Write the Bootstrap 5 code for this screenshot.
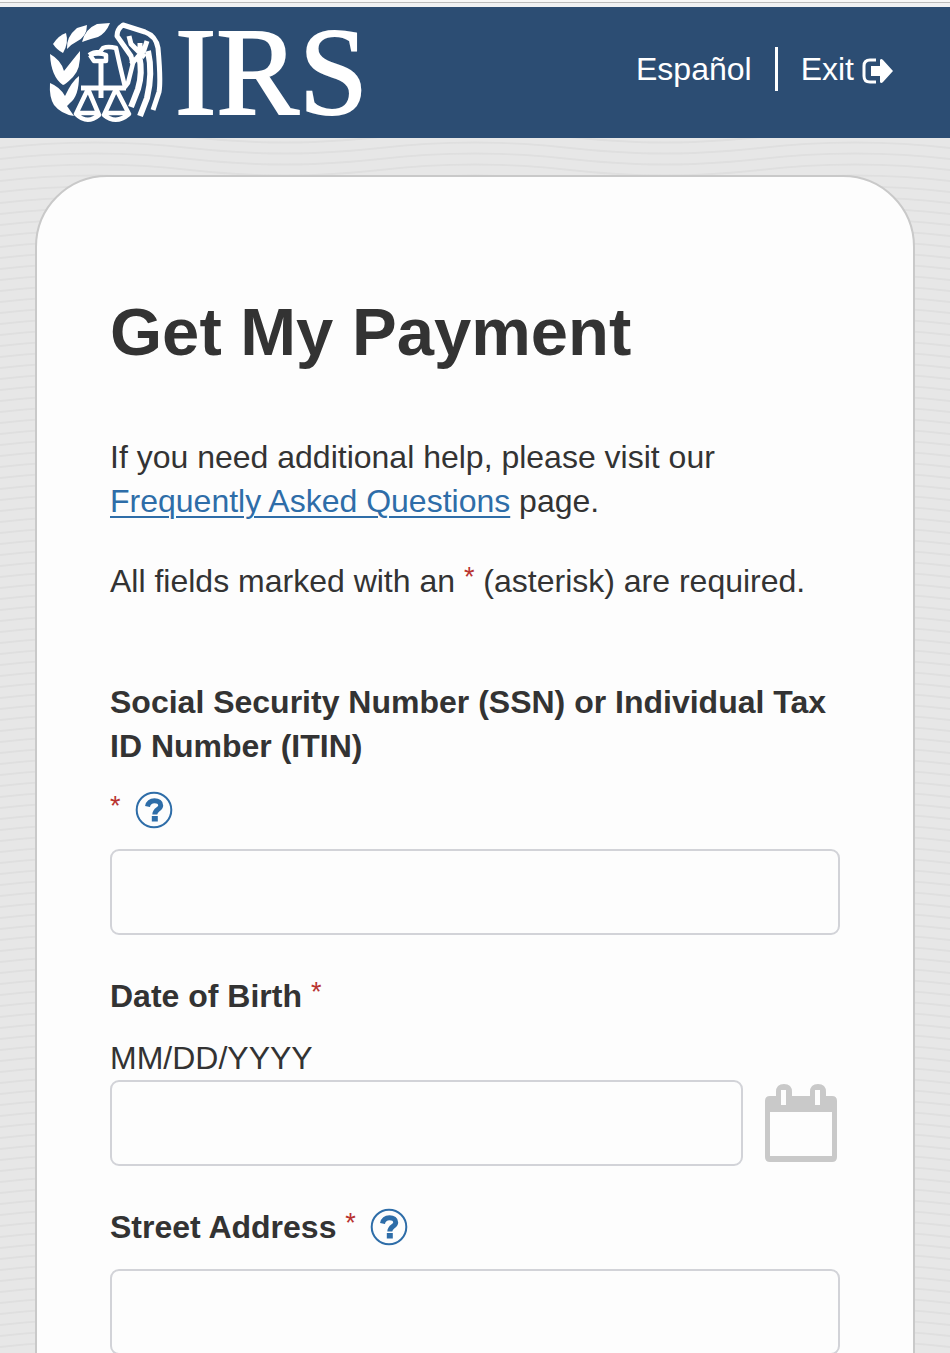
<!DOCTYPE html>
<html lang="en">
<head>
<meta charset="utf-8">
<meta name="viewport" content="width=device-width, initial-scale=1">
<title>Get My Payment</title>
<link href="https://cdn.jsdelivr.net/npm/bootstrap@5.3.0/dist/css/bootstrap.min.css" rel="stylesheet">
<style>
  body {
    font-family: "Liberation Sans", Arial, sans-serif;
    font-size: 32px;
    line-height: 44px;
    color: #333;
    background: #e7e7e7 url("data:image/svg+xml,%3Csvg xmlns='http://www.w3.org/2000/svg' width='380' height='11'%3E%3Cg fill='none' stroke='%23dfdfdf' stroke-width='2'%3E%3Cpath d='M0 5Q95-6 190 5T380 5M0 16Q95 5 190 16T380 16M0-6Q95-17 190-6T380-6'/%3E%3C/g%3E%3C/svg%3E");
  }
  .browser-edge { height: 7px; background: #f0f1f3; border-top: 2px solid #f7f7f7; }
  .browser-edge::before { content: ""; display: block; height: 1px; background: #bbb; }
  .site-header { height: 131px; background: #2c4d73; padding: 0 56px 0 49px; }
  .brand-eagle { width: 114px; height: 104px; }
  .brand-name { font: 124px/130px "Liberation Serif", "Times New Roman", serif; margin-left: 12px; -webkit-text-stroke: 2px #fff; }
  .site-nav { padding-bottom: 8px; }
  .exit-icon { margin-top: 4px; }
  .header-link { color: #fff; text-decoration: none; }
  .header-rule { width: 3px; height: 44px; background: #fff; margin: 0 23px; }
  .panel { margin: 37px 35px 0; border: 2px solid #c9c9c9; border-radius: 72px 72px 0 0; background: #fdfdfd; padding: 115px 73px 80px; }
  h1 { font-size: 67px; line-height: 80px; font-weight: 700; margin-bottom: 63px; }
  .faq { color: #2e6da8; text-decoration-thickness: 2px; text-underline-offset: 4px; }
  .star { color: #b93430; font-size: 27px; line-height: 32px; font-weight: 400; vertical-align: 6px; }
  .field-label { font-weight: 700; }
  .field-box { height: 86px; border: 2px solid #d2d3d8; border-radius: 9px; background: #fdfdfd; font-size: 32px; }
  .help-btn { width: 38px; height: 38px; }
  .cal-btn { width: 74px; height: 80px; margin: 0 2px 0 21px; }
  .intro { margin-bottom: 36px; }
  .note { margin-bottom: 77px; }
  .field-tools { height: 44px; margin: 20px 0 17px; }
  .field-tools .star { padding-bottom: 8px; }
  .tools-gap { margin-left: 14px; }
  .birth { margin: 39px 0 18px; }
  .street { margin: 39px 0 20px; }
</style>
</head>
<body>
<svg class="d-none" xmlns="http://www.w3.org/2000/svg">
  <symbol id="help" viewBox="0 0 38 38">
    <circle cx="19" cy="19" r="17.3" fill="none" stroke="#2e6da8" stroke-width="2"/>
    <path d="M12.500 15.500C13.500 11 16 9.800 19.500 9.800C23.500 9.800 25.700 11.600 25.700 14.400C25.700 18.500 19.800 18 19.800 23.500" fill="none" stroke="#2e6da8" stroke-width="5"/>
    <rect x="16.800" y="25" width="6" height="5.500" fill="#2e6da8"/>
  </symbol>
</svg>
<div class="vh-100 overflow-hidden">
  <div class="browser-edge"></div>
  <header class="site-header d-flex align-items-center justify-content-between text-white">
    <a href="#" class="header-link d-flex align-items-center" aria-label="IRS home">
      <svg class="brand-eagle" viewBox="0 0 114 104" fill="#fff" aria-hidden="true">
        <path d="M4 23Q10 14 17 12Q20 22 14 32Q8 29 4 23Z"/>
        <path d="M18 28Q17 16 28 7L38 4Q38 16 27 21Q21 24 18 28Z"/>
        <path d="M33 21Q36 8 48 3L61 2Q57 12 49 16Q41 18 33 21Z"/>
        <path d="M1 33Q12 39 15 50Q26 36 31 30Q32 48 24 56Q16 64 14 64Q2 56 1 33Z"/>
        <path d="M1 62Q11 66 16 75Q23 60 30 55Q30 75 21 82L18 85L25 95Q12 93 5 84Q0 76 1 62Z"/>
        <g fill="none" stroke="#fff" stroke-width="5" stroke-linejoin="round">
          <path d="M40 34Q44 31 51 31L54 27Q59 25 67 27L71 45L76 66L79 62L84 42M41 34L45 40H57V34Q50 31 40 34" stroke-width="4.500"/>
          <path d="M52 38V77M32 67H77"/>
          <path d="M39 68L27 93Q38 104 50 94ZM67 68L55 94Q67 104 80 93ZM27 92H49M57 92H78" stroke-width="4.500"/>
          <path d="M84 43L82 35L75 25L68 15Q68 8 74 4L96 11Q107 15 109 27Q112 60 110 71L104 89"/>
          <path d="M80 15L82 23L89 30L96 36M98 20L95 29L88 37L82 43M91 22V30"/>
          <path d="M90 34Q94 52 89 68L82 86" stroke-width="6"/>
          <path d="M99 30Q104 52 98 77L91 95" stroke-width="6"/>
        </g>
      </svg>
      <span class="brand-name">IRS</span>
    </a>
    <nav class="site-nav d-flex align-items-center">
      <a href="#" class="header-link">Español</a>
      <span class="header-rule"></span>
      <a href="#" class="header-link d-flex align-items-center">Exit
        <svg class="exit-icon ms-2" width="32" height="28" viewBox="0 0 32 28" aria-hidden="true">
          <path d="M14 3H8Q2 3 2 9V19Q2 25 8 25H14" fill="none" stroke="#fff" stroke-width="3"/>
          <path d="M9 9H18V3Q19 1 21 3L31 14L21 25Q19 27 18 25V19H9Z" fill="#fff"/>
        </svg>
      </a>
    </nav>
  </header>
  <main class="panel">
    <h1>Get My Payment</h1>
    <p class="intro">If you need additional help, please visit our <a href="#" class="faq">Frequently Asked Questions</a> page.</p>
    <p class="note">All fields marked with an <span class="star">*</span> (asterisk) are required.</p>
    <form>
      <label for="ssn" class="field-label d-block">Social Security Number (SSN) or Individual Tax ID Number (ITIN)</label>
      <div class="field-tools d-flex align-items-center">
        <span class="star">*</span>
        <button type="button" class="btn p-0 border-0 d-flex tools-gap" aria-label="Help with taxpayer number"><svg class="help-btn"><use href="#help"/></svg></button>
      </div>
      <input id="ssn" type="text" class="form-control field-box">
      <label for="dob" class="field-label birth d-block">Date of Birth <span class="star">*</span></label>
      <div id="dob-format">MM/DD/YYYY</div>
      <div class="d-flex align-items-center">
        <input id="dob" type="text" class="form-control field-box" aria-describedby="dob-format">
        <button type="button" class="btn p-0 border-0 d-flex flex-shrink-0" aria-label="Choose date">
          <svg class="cal-btn" viewBox="0 0 74 80">
            <path fill="#c9c9c9" fill-rule="evenodd" d="M6 13H12V9Q12 1 20 1T28 9V13H46V9Q46 1 54 1T62 9V13H68Q73 13 73 18V74Q73 79 68 79H6Q1 79 1 74V18Q1 13 6 13ZM6 29V73H68V29ZM17 7V22H22V7ZM51 7V22H56V7Z"/>
          </svg>
        </button>
      </div>
      <div class="street d-flex align-items-center">
        <label for="street" class="field-label">Street Address <span class="star">*</span></label>
        <button type="button" class="btn p-0 border-0 d-flex tools-gap" aria-label="Help with street address"><svg class="help-btn"><use href="#help"/></svg></button>
      </div>
      <input id="street" type="text" class="form-control field-box">
    </form>
  </main>
</div>
<script src="https://cdn.jsdelivr.net/npm/bootstrap@5.3.0/dist/js/bootstrap.bundle.min.js"></script>
</body>
</html>
